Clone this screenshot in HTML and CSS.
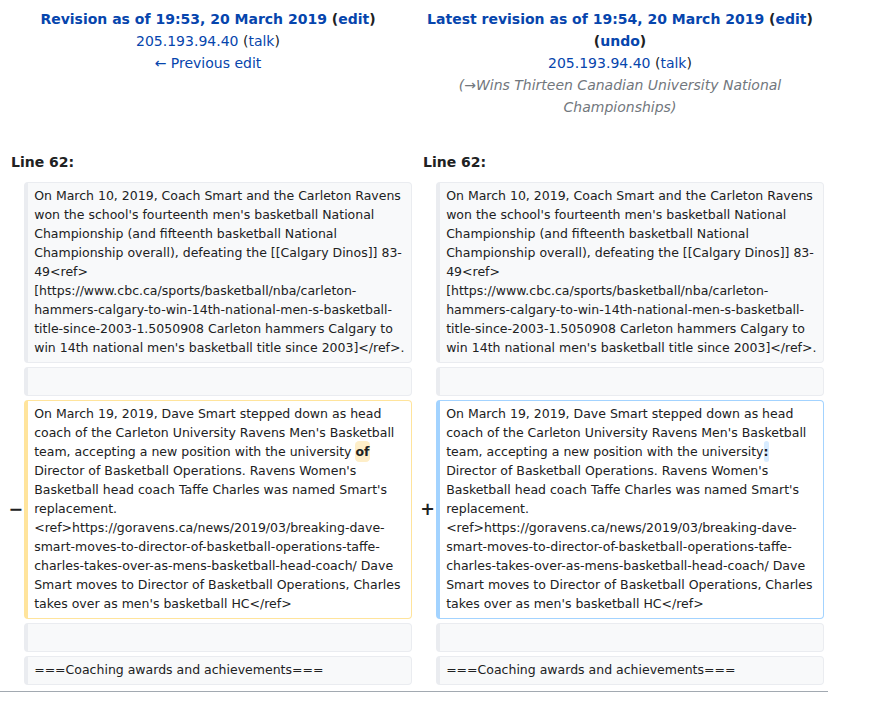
FILE: index.html
```html
<!DOCTYPE html>
<html>
<head>
<meta charset="utf-8">
<link rel="stylesheet" href="styles.css">
</head>
<body>
<div class="page">
<table class="diff">
  <colgroup>
    <col class="col-marker"><col class="col-content"><col class="col-marker"><col class="col-content">
  </colgroup>
  <tr class="title-row">
    <td colspan="2" class="otitle">
      <div><strong><a class="link" href="#">Revision as of 19:53, 20 March 2019</a> <span class="paren">(<a class="link" href="#">edit</a>)</span></strong></div>
      <div><a class="link norm" href="#">205.193.94.40</a> <span class="paren norm">(<a class="link" href="#">talk</a>)</span></div>
      <div><a class="link norm" href="#">← Previous edit</a></div>
    </td>
    <td colspan="2" class="ntitle">
      <div><strong><a class="link" href="#">Latest revision as of 19:54, 20 March 2019</a> <span class="paren">(<a class="link" href="#">edit</a>)</span></strong></div>
      <div><strong><span class="paren">(<a class="link" href="#">undo</a>)</span></strong></div>
      <div><a class="link norm" href="#">205.193.94.40</a> <span class="paren norm">(<a class="link" href="#">talk</a>)</span></div>
      <div class="comment">(<span class="arrow">→</span>Wins Thirteen Canadian University National Championships)</div>
    </td>
  </tr>
  <tr class="spacer-row"><td colspan="4"></td></tr>
  <tr>
    <td colspan="2" class="lineno">Line 62:</td>
    <td colspan="2" class="lineno">Line 62:</td>
  </tr>
  <tr>
    <td class="marker"></td>
    <td class="cell context"><div>On March 10, 2019, Coach Smart and the Carleton Ravens won the school's fourteenth men's basketball National Championship (and fifteenth basketball National Championship overall), defeating the [[Calgary Dinos]] 83-49&lt;ref&gt; [https://www.cbc.ca/sports/basketball/nba/carleton-hammers-calgary-to-win-14th-national-men-s-basketball-title-since-2003-1.5050908 Carleton hammers Calgary to win 14th national men's basketball title since 2003]&lt;/ref&gt;.</div></td>
    <td class="marker"></td>
    <td class="cell context"><div>On March 10, 2019, Coach Smart and the Carleton Ravens won the school's fourteenth men's basketball National Championship (and fifteenth basketball National Championship overall), defeating the [[Calgary Dinos]] 83-49&lt;ref&gt; [https://www.cbc.ca/sports/basketball/nba/carleton-hammers-calgary-to-win-14th-national-men-s-basketball-title-since-2003-1.5050908 Carleton hammers Calgary to win 14th national men's basketball title since 2003]&lt;/ref&gt;.</div></td>
  </tr>
  <tr>
    <td class="marker"></td>
    <td class="cell context"><div>&#160;</div></td>
    <td class="marker"></td>
    <td class="cell context"><div>&#160;</div></td>
  </tr>
  <tr>
    <td class="marker">−</td>
    <td class="cell deleted"><div>On March 19, 2019, Dave Smart stepped down as head coach of the Carleton University Ravens Men's Basketball team, accepting a new position with the university <del class="change">of</del> Director of Basketball Operations. Ravens Women's Basketball head coach Taffe Charles was named Smart's replacement. &lt;ref&gt;https://goravens.ca/news/2019/03/breaking-dave-smart-moves-to-director-of-basketball-operations-taffe-charles-takes-over-as-mens-basketball-head-coach/ Dave Smart moves to Director of Basketball Operations, Charles takes over as men's basketball HC&lt;/ref&gt;</div></td>
    <td class="marker">+</td>
    <td class="cell added"><div>On March 19, 2019, Dave Smart stepped down as head coach of the Carleton University Ravens Men's Basketball team, accepting a new position with the university<ins class="change">:</ins> Director of Basketball Operations. Ravens Women's Basketball head coach Taffe Charles was named Smart's replacement. &lt;ref&gt;https://goravens.ca/news/2019/03/breaking-dave-smart-moves-to-director-of-basketball-operations-taffe-charles-takes-over-as-mens-basketball-head-coach/ Dave Smart moves to Director of Basketball Operations, Charles takes over as men's basketball HC&lt;/ref&gt;</div></td>
  </tr>
  <tr>
    <td class="marker"></td>
    <td class="cell context"><div>&#160;</div></td>
    <td class="marker"></td>
    <td class="cell context"><div>&#160;</div></td>
  </tr>
  <tr>
    <td class="marker"></td>
    <td class="cell context"><div>===Coaching awards and achievements===</div></td>
    <td class="marker"></td>
    <td class="cell context"><div>===Coaching awards and achievements===</div></td>
  </tr>
</table>
<hr class="diff-hr">
</div>
</body>
</html>
```
FILE: styles.css
```css
html, body {
  margin: 0;
  padding: 0;
  background: #fff;
}
body {
  font-family: "DejaVu Sans", sans-serif;
  font-size: 14px;
  color: #202122;
}
.page {
  width: 828px;
}
.diff {
  width: 100%;
  table-layout: fixed;
  border-spacing: 4px;
  border-collapse: separate;
}
.col-marker { width: 2%; }
.col-content { width: 48%; }
.diff td {
  padding: 0.33em 0.5em;
  vertical-align: top;
}
.otitle, .ntitle {
  text-align: center;
  line-height: 22px;
}
.diff td.otitle, .diff td.ntitle {
  padding-top: 4px;
}
.link {
  color: #0645ad;
  text-decoration: none;
}
.paren {
  color: #202122;
}
.norm {
  font-weight: normal;
}
.comment {
  font-style: italic;
  color: #72777d;
}
.arrow {
  color: #72777d;
}
.diff .spacer-row td {
  height: 16px;
  padding: 0;
}
.lineno {
  font-weight: bold;
  line-height: 22px;
}
.diff td.marker {
  padding: 0.25em;
  font-size: 1.25em;
  font-weight: bold;
  line-height: 1.2;
  vertical-align: middle;
  text-align: left;
  white-space: nowrap;
}
.diff td.cell {
  font-size: 12.5px;
  line-height: 19px;
  padding: 3px 6px 5px 6px;
  border-style: solid;
  border-width: 1px 1px 1px 4px;
  border-radius: 4px;
  white-space: pre-wrap;
  vertical-align: top;
}
.cell div {
  overflow-wrap: break-word;
}
.context {
  background: #f8f9fa;
  border-color: #eaecf0;
  color: #202122;
}
.deleted {
  border-color: #ffe49c;
}
.added {
  border-color: #a3d3ff;
}
.change {
  font-weight: bold;
  text-decoration: none;
  border-radius: 0.33em;
  padding: 0.25em 0;
}
.deleted .change {
  background: #feeec8;
}
.added .change {
  background: #d8ecff;
}
.diff-hr {
  margin: 2px 0 0;
  border: 0;
  height: 1px;
  background: #a2a9b1;
}
```
